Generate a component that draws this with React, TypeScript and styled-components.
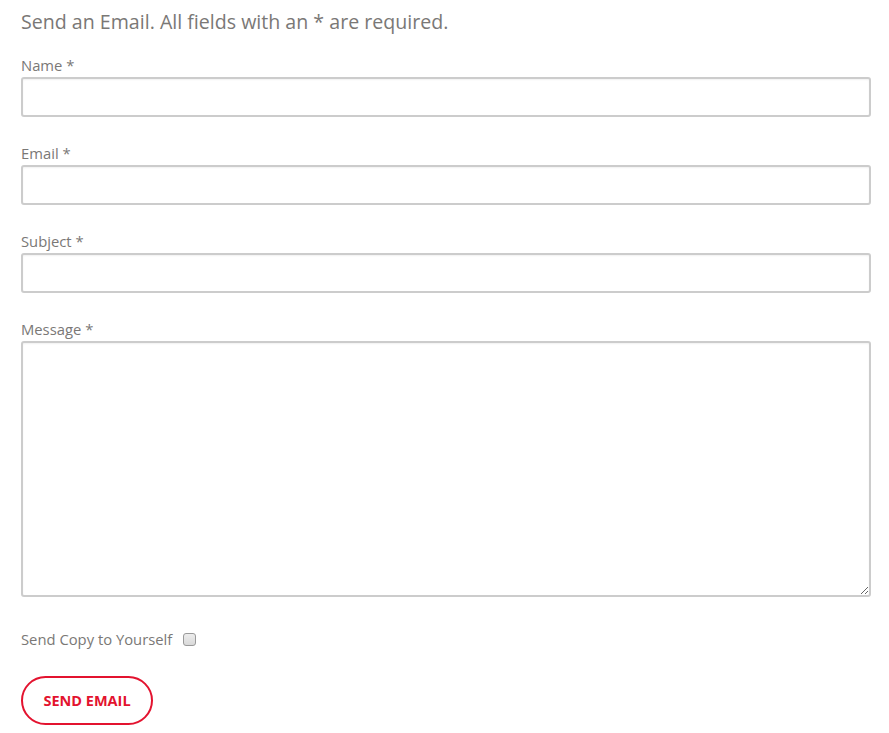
import styled, { createGlobalStyle } from "styled-components";

const GlobalStyle = createGlobalStyle`
  body {
    margin: 0;
    background: #fff;
    font-family: "Open Sans", Lato, "Liberation Sans", sans-serif;
  }
`;

const Form = styled.form`
  padding: 10px 18px 0 21px;
`;

const Heading = styled.h2`
  margin: 0 0 21px;
  font-size: 19.6px;
  line-height: 24px;
  font-weight: 400;
  color: #7a7876;
`;

const Field = styled.div`
  margin-bottom: 26px;
`;

const Label = styled.label`
  display: block;
  margin-bottom: 2px;
  font-size: 14.8px;
  line-height: 20px;
  color: #7a7876;
`;

const inputBase = `
  display: block;
  box-sizing: border-box;
  width: 100%;
  border: 2px solid #cccccc;
  border-radius: 3px;
  background: #fff;
  box-shadow: inset 0 1px 2px rgba(0, 0, 0, 0.06);
  font: inherit;
  padding: 6px 10px;
  outline: none;
`;

const Input = styled.input`
  ${inputBase}
  height: 40px;
`;

const TextArea = styled.textarea`
  ${inputBase}
  height: 256px;
  resize: vertical;
`;

const CheckRow = styled.label`
  display: flex;
  align-items: center;
  gap: 11px;
  margin-top: 32px;
  font-size: 14.8px;
  line-height: 20px;
  color: #7a7876;
`;

const Check = styled.input`
  appearance: none;
  margin: 0;
  width: 13px;
  height: 13px;
  border: 1px solid #9a9a9a;
  border-radius: 3px;
  background: linear-gradient(#ededed, #d9d9d9);
`;

const SendButton = styled.button`
  margin-top: 27px;
  width: 132px;
  height: 49px;
  border: 2px solid #e3132f;
  border-radius: 25px;
  background: #fff;
  color: #e3132f;
  font-family: inherit;
  font-size: 14.5px;
  font-weight: 700;
  cursor: pointer;
`;

const fields = [
  { id: "name", label: "Name" },
  { id: "email", label: "Email" },
  { id: "subject", label: "Subject" },
];

export default function App() {
  return (
    <>
      <GlobalStyle />
      <Form onSubmit={(e) => e.preventDefault()}>
        <Heading>Send an Email. All fields with an * are required.</Heading>
        {fields.map((f) => (
          <Field key={f.id}>
            <Label htmlFor={f.id}>{f.label} *</Label>
            <Input id={f.id} type={f.id === "email" ? "email" : "text"} />
          </Field>
        ))}
        <Label htmlFor="message">Message *</Label>
        <TextArea id="message" />
        <CheckRow>
          Send Copy to Yourself
          <Check type="checkbox" />
        </CheckRow>
        <SendButton type="submit">SEND EMAIL</SendButton>
      </Form>
    </>
  );
}
